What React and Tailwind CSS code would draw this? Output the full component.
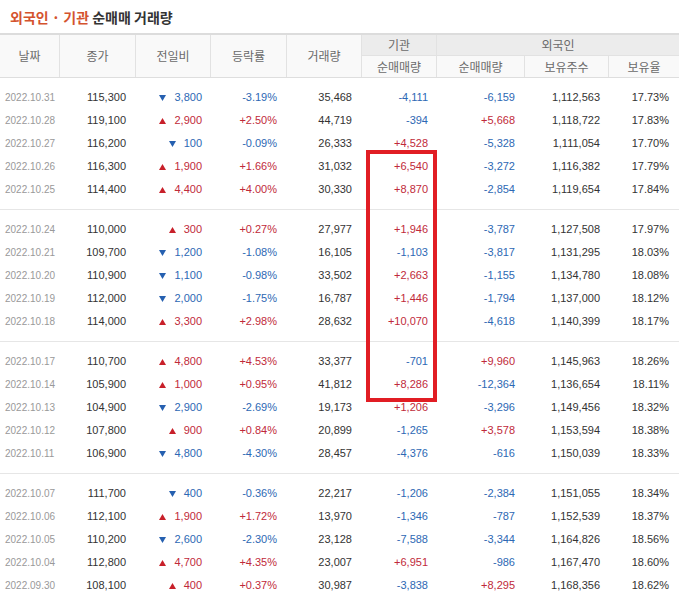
const groups = [
  [
    ["2022.10.31", "115,300", "down", "3,800", "-3.19%", "35,468", "-4,111", "-6,159", "1,112,563", "17.73%"],
    ["2022.10.28", "119,100", "up", "2,900", "+2.50%", "44,719", "-394", "+5,668", "1,118,722", "17.83%"],
    ["2022.10.27", "116,200", "down", "100", "-0.09%", "26,333", "+4,528", "-5,328", "1,111,054", "17.70%"],
    ["2022.10.26", "116,300", "up", "1,900", "+1.66%", "31,032", "+6,540", "-3,272", "1,116,382", "17.79%"],
    ["2022.10.25", "114,400", "up", "4,400", "+4.00%", "30,330", "+8,870", "-2,854", "1,119,654", "17.84%"],
  ],
  [
    ["2022.10.24", "110,000", "up", "300", "+0.27%", "27,977", "+1,946", "-3,787", "1,127,508", "17.97%"],
    ["2022.10.21", "109,700", "down", "1,200", "-1.08%", "16,105", "-1,103", "-3,817", "1,131,295", "18.03%"],
    ["2022.10.20", "110,900", "down", "1,100", "-0.98%", "33,502", "+2,663", "-1,155", "1,134,780", "18.08%"],
    ["2022.10.19", "112,000", "down", "2,000", "-1.75%", "16,787", "+1,446", "-1,794", "1,137,000", "18.12%"],
    ["2022.10.18", "114,000", "up", "3,300", "+2.98%", "28,632", "+10,070", "-4,618", "1,140,399", "18.17%"],
  ],
  [
    ["2022.10.17", "110,700", "up", "4,800", "+4.53%", "33,377", "-701", "+9,960", "1,145,963", "18.26%"],
    ["2022.10.14", "105,900", "up", "1,000", "+0.95%", "41,812", "+8,286", "-12,364", "1,136,654", "18.11%"],
    ["2022.10.13", "104,900", "down", "2,900", "-2.69%", "19,173", "+1,206", "-3,296", "1,149,456", "18.32%"],
    ["2022.10.12", "107,800", "up", "900", "+0.84%", "20,899", "-1,265", "+3,578", "1,153,594", "18.38%"],
    ["2022.10.11", "106,900", "down", "4,800", "-4.30%", "28,457", "-4,376", "-616", "1,150,039", "18.33%"],
  ],
  [
    ["2022.10.07", "111,700", "down", "400", "-0.36%", "22,217", "-1,206", "-2,384", "1,151,055", "18.34%"],
    ["2022.10.06", "112,100", "up", "1,900", "+1.72%", "13,970", "-1,346", "-787", "1,152,539", "18.37%"],
    ["2022.10.05", "110,200", "down", "2,600", "-2.30%", "23,128", "-7,588", "-3,344", "1,164,826", "18.56%"],
    ["2022.10.04", "112,800", "up", "4,700", "+4.35%", "23,007", "+6,951", "-986", "1,167,470", "18.60%"],
    ["2022.09.30", "108,100", "up", "400", "+0.37%", "30,987", "-3,838", "+8,295", "1,168,356", "18.62%"],
  ],
];

const cols = "grid grid-cols-[60px_76px_75px_76px_75px_75px_88px_84px_70px]";

// +/- 부호로 색을 고른다
const tone = (v) => (v.startsWith("+") ? "text-[#bf2a3a]" : v.startsWith("-") ? "text-[#2d68b4]" : "text-[#333]");

const Arrow = ({ dir }) =>
  dir === "up" ? (
    <svg width="7" height="6" viewBox="0 0 7 6"><path d="M3.5 0L7 6H0z" fill="#c8202a" /></svg>
  ) : (
    <svg width="7" height="6" viewBox="0 0 7 6"><path d="M0 0h7L3.5 6z" fill="#2660b0" /></svg>
  );

const Row = ({ r }) => {
  const [date, close, dir, diff, rate, vol, inst, frgn, hold, ratio] = r;
  const diffColor = dir === "up" ? "text-[#bf2a3a]" : "text-[#2d68b4]";
  return (
    <div className={`${cols} h-[23px] items-center text-[11px] text-right`}>
      <div className="text-left pl-[5px] text-[10px] text-[#999]">{date}</div>
      <div className="pr-[10px] text-[#333]">{close}</div>
      <div className={`pr-[9px] flex items-center justify-end gap-[8px] ${diffColor}`}>
        <Arrow dir={dir} />
        <span>{diff}</span>
      </div>
      <div className={`pr-[10px] ${tone(rate)}`}>{rate}</div>
      <div className="pr-[10px] text-[#333]">{vol}</div>
      <div className={`pr-[9px] ${tone(inst)}`}>{inst}</div>
      <div className={`pr-[10px] ${tone(frgn)}`}>{frgn}</div>
      <div className="pr-[9px] text-[#333]">{hold}</div>
      <div className="pr-[10px] text-[#333]">{ratio}</div>
    </div>
  );
};

export default function App() {
  return (
    <div className="relative w-[679px] h-[605px] bg-white font-['Liberation_Sans','Noto_Sans_CJK_KR',sans-serif] overflow-hidden">
      <div className="h-[33px] pt-[9px] pl-[10px] text-[14px] leading-[17px] font-bold font-['Noto_Sans_CJK_KR',sans-serif]">
        <span className="text-[#d4532e]">외국인 · 기관</span>{" "}
        <span className="text-[#333]">순매매 거래량</span>
      </div>

      <div className={`${cols} grid-rows-[21px_21px] border-t-2 border-[#dcdcdc] border-b border-b-[#dedede] text-[12px] text-[#6a6a6a] font-['Noto_Sans_CJK_KR',sans-serif]`}>
        <div className="row-span-2 flex items-center justify-center bg-[#f9f9f9] border-r border-[#e2e2e2]">날짜</div>
        <div className="row-span-2 flex items-center justify-center bg-[#f9f9f9] border-r border-[#e2e2e2]">종가</div>
        <div className="row-span-2 flex items-center justify-center bg-[#f9f9f9] border-r border-[#e2e2e2]">전일비</div>
        <div className="row-span-2 flex items-center justify-center bg-[#f9f9f9] border-r border-[#e2e2e2]">등락률</div>
        <div className="row-span-2 flex items-center justify-center bg-[#f9f9f9] border-r border-[#e2e2e2]">거래량</div>
        <div className="flex items-center justify-center bg-[#ececec] border-r border-b border-[#e2e2e2]">기관</div>
        <div className="col-span-3 flex items-center justify-center bg-[#ececec] border-b border-[#e2e2e2]">외국인</div>
        <div className="flex items-center justify-center bg-[#f9f9f9] border-r border-[#e2e2e2]">순매매량</div>
        <div className="flex items-center justify-center bg-[#f9f9f9] border-r border-[#e2e2e2]">순매매량</div>
        <div className="flex items-center justify-center bg-[#f9f9f9] border-r border-[#e2e2e2]">보유주수</div>
        <div className="flex items-center justify-center bg-[#f9f9f9]">보유율</div>
      </div>

      {groups.map((g, i) => (
        <div key={i} className={`py-[8px] ${i < groups.length - 1 ? "border-b border-[#e6e6e6]" : ""}`}>
          {g.map((r) => (
            <Row key={r[0]} r={r} />
          ))}
        </div>
      ))}

      <div className="absolute left-[366px] top-[150px] w-[71px] h-[252px] border-4 border-[#e11d24]" />
    </div>
  );
}
